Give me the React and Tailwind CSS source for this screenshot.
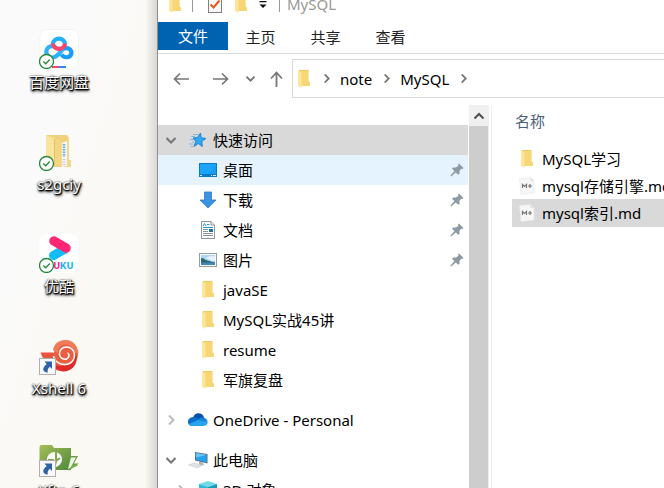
import React from "react";

function FolderIcon({ className = "w-[14px] h-[18px]" }) {
  return (
    <svg viewBox="0 0 14 18" className={className} aria-hidden="true">
      <path d="M2 0h9.500v12H13v4H2z" fill="#f0c95f" />
      <path d="M4 1h7v11h2v4H4z" fill="#f7d675" />
      <path d="M1 0.500 4.500 2v16L1 16z" fill="#ffe59a" />
    </svg>
  );
}

function Chevron({ dir, color = "#777", size = 10, weight = 2 }) {
  const paths = {
    down: "M0.500 3 5 7.500 9.500 3",
    right: "M3 0.500 7.500 5 3 9.500",
    up: "M0.500 7.500 5 3 9.500 7.500",
  };
  return (
    <svg width={size} height={size} viewBox="0 0 10 10" fill="none" stroke={color} strokeWidth={weight} aria-hidden="true">
      <path d={paths[dir]} />
    </svg>
  );
}

function Pin() {
  return (
    <svg width="14" height="14" viewBox="0 0 14 14" aria-hidden="true">
      <path d="M9 0.500 13.500 5 12.300 5.900 11.300 5.700 9.400 8 9.600 10.700 8.300 11.800 5.800 9.500 1.200 13.500 0.300 12.800 4.500 8 2 5.700 3.300 4.400 6 4.600 8.400 2.700 8 1.500z" fill="#8d9aa3" />
    </svg>
  );
}

function StarIcon() {
  return (
    <svg width="20" height="18" viewBox="0 0 20 18" aria-hidden="true">
      <path d="M12.500 2 13.200 6.800 18 7.500 13.800 10.300 14.300 15.500 10.300 12.500 6 15.500 7.800 10.500 5 7 9.300 6.500z" fill="#2fa8f2" stroke="#1b7ccb" strokeWidth="0.900" />
      <path d="M5 3.500h5M3 5.500h4M2 8.500h3M4 11h2M1 13h4M3 15.500h2" stroke="#79b3e3" strokeWidth="0.900" />
    </svg>
  );
}

function DesktopIcon() {
  return (
    <svg width="18" height="14" viewBox="0 0 18 14" aria-hidden="true">
      <rect width="18" height="14" fill="#0b78c8" />
      <rect x="1" y="1" width="16" height="10" fill="#1ba4fb" />
      <path d="M10 11 17 3v8z" fill="#169af2" />
      <path d="M1 12.500h2M12 12.500h1M14 12.500h3" stroke="#d9efff" />
    </svg>
  );
}

function DownloadIcon() {
  return (
    <svg width="18" height="18" viewBox="0 0 18 18" aria-hidden="true">
      <path d="M5.500 1h7v8H17L9 17 1 9h4.500z" fill="#3b93e2" stroke="#2a7cca" strokeWidth="0.800" />
    </svg>
  );
}

function DocumentIcon() {
  return (
    <svg width="16" height="18" viewBox="0 0 16 18" aria-hidden="true">
      <path d="M1.500 0.500h9.500l3.500 3.500v13.500h-13z" fill="#fff" stroke="#8f9598" />
      <path d="M11 0.500v3.500h3.500" fill="#e3e6e8" stroke="#8f9598" />
      <path d="M3 5 4.500 2.500 6 5M7 3.500h2.500M3 6.500h10" stroke="#2695d5" fill="none" />
      <path d="M3 8.500h5M3 10.500h5M3 12.500h10M3 14.500h10" stroke="#8d9498" />
      <rect x="9" y="8" width="4" height="3" fill="#20719c" />
    </svg>
  );
}

function PictureIcon() {
  return (
    <svg width="18" height="14" viewBox="0 0 18 14" aria-hidden="true">
      <rect x="0.500" y="0.500" width="17" height="13" fill="#fff" stroke="#979ca0" />
      <rect x="2" y="2" width="14" height="10" fill="#a9d6f5" />
      <path d="M7 5c2-2 5-2 9-1.500v4c-3 1-6-1-9-2.500z" fill="#e5f3fc" />
      <path d="M2 5c3 0 4 2 6.500 2.500S13 9 16 9.300V10H2z" fill="#2b6b6b" />
      <path d="M2 9.500h14V12H2z" fill="#4586b8" />
    </svg>
  );
}

function CloudIcon() {
  return (
    <svg width="20" height="14" viewBox="0 0 20 14" aria-hidden="true">
      <path d="M5 5C6 1 9 0 11 0.300c3 .3 4.600 2.200 5 4.200L12 9z" fill="#0a50a8" />
      <path d="M4.500 13A4.300 4.300 0 0 1 4 4.300c2.500-.8 4.500.2 6 1.500l6 4L12 13z" fill="#0c6fce" />
      <path d="M15.500 13H4c-1.500 0-2.700-.7-3.300-1.800L11 6.500l5-1.500c5 .6 5 8-.5 8z" fill="#27a3ec" />
      <path d="M9.500 6.800c1.800-2 4-2.700 6.500-2.300l3 3-3 1z" fill="#1583dc" />
    </svg>
  );
}

function ComputerIcon() {
  return (
    <svg width="20" height="18" viewBox="0 0 20 18" aria-hidden="true">
      <path d="M7 1 19.500 3v9.500L7 9.500z" fill="#5a6a76" />
      <path d="M7.800 2 18.700 3.800v7.700L7.800 8.800z" fill="#2aa0f0" />
      <path d="M7.800 2 18.700 3.800 8 6.500z" fill="#6cc5fa" />
      <path d="M11 10.500 15 11.500 16 14.500 11 13.500z" fill="#aab5bd" />
      <path d="M0.500 14 6 12 14 14.500 9.500 17z" fill="#dfe3e6" stroke="#bdc5ca" strokeWidth="0.500" />
    </svg>
  );
}

function CubeIcon() {
  return (
    <svg width="18" height="18" viewBox="0 0 18 18" aria-hidden="true">
      <path d="M0 3 9 0l9 3-9 3z" fill="#6fdcea" />
      <path d="M0 3 9 6v12L0 14z" fill="#31b9d3" />
      <path d="M18 3 9 6v12l9-4z" fill="#159cb9" />
    </svg>
  );
}

function MarkdownIcon() {
  return (
    <svg width="16" height="18" viewBox="0 0 16 18" aria-hidden="true">
      <path d="M0.500 1.500 11.500 0.500l3.500 3V16L2 17.500z" fill="#f6f6f6" stroke="#e9e9e9" strokeWidth="0.600" />
      <path d="M11.500 0.500V4L15 3.500z" fill="#dedede" />
      <path d="M3.500 11V7.500L5.500 9.500 7.500 7.500V11M9 9h4M11 7v4" stroke="#777" strokeWidth="1.200" fill="none" />
    </svg>
  );
}

function SyncBadge() {
  return (
    <g>
      <circle cx="7.500" cy="32.500" r="7" fill="#fff" stroke="#23893a" strokeWidth="1.300" />
      <path d="M4.300 32.500 6.800 34.800 10.800 30.500" fill="none" stroke="#23893a" strokeWidth="1.300" />
    </g>
  );
}

function ShortcutBadge() {
  return (
    <g>
      <rect x="0.500" y="23.500" width="16" height="16" fill="#f7f9fb" stroke="#b0b0b0" />
      <path d="M5.500 26.500H13V34l-2.200-2.200C9 33.300 8.300 35 8.800 37.500 6.500 37.500 3.500 36 4.500 33c.5-1.500 1.800-2.500 3.200-4z" fill="#2f62a5" />
    </g>
  );
}

function NetdiskLogo() {
  return (
    <svg width="40" height="40" viewBox="0 0 40 40" aria-hidden="true">
      <rect x="1" y="0.500" width="38.500" height="38.500" rx="7" fill="#fff" stroke="#ececec" strokeWidth="0.600" />
      <g fill="none" strokeWidth="4.200">
        <path d="M24.500 19.500c-3 2.500-5.500 9-11 9a5.700 5.700 0 1 1 3.500-9.800" stroke="#2cb4fb" />
        <path d="M22.500 25.500c2.500 4 8.500 3.500 9.800-.5 1-4-3.500-7.500-7.800-5" stroke="#179dfb" />
        <path d="M13.800 15a6.200 6.200 0 0 1 12.300 0" stroke="#22b1f7" />
        <path d="M13.800 14.500a6.200 6.200 0 0 0 12.300 0" stroke="#fb456b" />
      </g>
      <path d="M13 37h7v2h-7z" fill="#fb456b" />
      <path d="M20 37h7v2h-7z" fill="#2c89ff" />
      <SyncBadge />
    </svg>
  );
}

function DesktopFolder() {
  return (
    <svg width="40" height="40" viewBox="0 0 40 40" aria-hidden="true">
      <path d="M7 4h21l2 3v22h2v7H11z" fill="#efd07b" />
      <path d="M28 7h2v22h2v7h-4z" fill="#f3d786" />
      <path d="M22.500 12 28 10v25l-5.500 1z" fill="#f3f5f6" />
      <path d="M25 13v13" stroke="#6fb0d8" strokeWidth="2.500" strokeDasharray="1.500 1" />
      <path d="M23.500 28.500h3M23.500 31h3M23.500 33.500h3" stroke="#c9cdd0" strokeWidth="1" />
      <path d="M7 4 16 6l6.500 4v25H16l-9-3z" fill="#f3d582" />
      <path d="M7 4 15 8v28l-8-3z" fill="#fae39c" />
      <path d="M15.500 8v27" stroke="#e2bd64" strokeWidth="0.800" />
      <SyncBadge />
    </svg>
  );
}

function YoukuLogo() {
  return (
    <svg width="40" height="40" viewBox="0 0 40 40" aria-hidden="true">
      <rect x="0.500" y="0.500" width="39" height="39" rx="7" fill="#fff" />
      <path d="M14.500 22.500 26 16" stroke="#13bdfb" strokeWidth="9" strokeLinecap="round" />
      <path d="M15 8 27 15" stroke="#ff2675" strokeWidth="9.500" strokeLinecap="round" />
      <text x="14.500" y="36" fontSize="9" fontWeight="800" fontFamily="Inter, sans-serif" fill="#ff2384">U</text>
      <text x="21" y="36" fontSize="9" fontWeight="800" fontFamily="Inter, sans-serif" fill="#24b4ef">KU</text>
      <SyncBadge />
    </svg>
  );
}

function XshellLogo() {
  return (
    <svg width="40" height="40" viewBox="0 0 40 40" aria-hidden="true">
      <path d="M1.500 17.500H14c4 0 4 10 12 12l-6 6C9 35 5 26 1.500 17.500z" fill="#e8563c" />
      <circle cx="27" cy="19" r="12" fill="#ea5f42" />
      <path d="M15 30c9 3 20-1 22-12 3 10-3 18-12 18.500-4 0-8-2-10-6.500z" fill="#dd2a2a" />
      <path d="M14 15C15 8 21 4.500 27 5c7 .5 11.500 5 12.500 13h-4.500C34 12 30 9 26 9.500c-5 .5-7 4-7 9z" fill="#f07b5a" />
      <path d="M14.500 21c1 6 7 9 12 8.500 6-.5 9.500-5 9-10-.5-4.500-4-7.500-8-7.500-4.500 0-7.500 3.500-7 7.500.5 3.500 4 5.500 7 4.500 2.800-1 3.500-4.500 1-6" fill="none" stroke="#fff" strokeWidth="1.500" />
      <ShortcutBadge />
    </svg>
  );
}

function XftpLogo() {
  return (
    <svg width="40" height="40" viewBox="0 0 40 40" aria-hidden="true">
      <defs>
        <linearGradient id="leaf" x1="0" y1="0" x2="1" y2="1">
          <stop offset="0" stopColor="#a5bd58" />
          <stop offset="1" stopColor="#4f8a3b" />
        </linearGradient>
      </defs>
      <path d="M0.500 10q0-2 2-2H13l2 3h17v22H0.500z" fill="url(#leaf)" />
      <path d="M31 19h8l-4 7.500h5L29 33.500z" fill="#6a9f48" />
      <path d="M32 20.500h5l-4 7.500h3.500L29 32z" fill="#eef4e6" />
      <path d="M33 28h6.500L30 33z" fill="#79ad4e" />
      <circle cx="15.500" cy="22.500" r="7.500" fill="#fff" />
      <path d="M17 15v9M17 24l4-3M17 24c0 3-1.500 5-4 6M9 23h6" stroke="#7ca849" strokeWidth="2" fill="none" />
      <ShortcutBadge />
    </svg>
  );
}

const shortcuts = [
  { name: "百度网盘", Icon: NetdiskLogo },
  { name: "s2gciy", Icon: DesktopFolder },
  { name: "优酷", Icon: YoukuLogo },
  { name: "Xshell 6", Icon: XshellLogo },
  { name: "Xftp 6", Icon: XftpLogo },
];

const quickAccess = [
  { name: "桌面", Icon: DesktopIcon, pinned: true, hovered: true },
  { name: "下载", Icon: DownloadIcon, pinned: true },
  { name: "文档", Icon: DocumentIcon, pinned: true },
  { name: "图片", Icon: PictureIcon, pinned: true },
  { name: "javaSE", Icon: FolderIcon },
  { name: "MySQL实战45讲", Icon: FolderIcon },
  { name: "resume", Icon: FolderIcon },
  { name: "军旗复盘", Icon: FolderIcon },
];

const files = [
  { name: "MySQL学习", Icon: FolderIcon },
  { name: "mysql存储引擎.md", Icon: MarkdownIcon },
  { name: "mysql索引.md", Icon: MarkdownIcon, selected: true },
];

function TreeRow({ name, Icon, pinned, chevron, child, className = "" }) {
  return (
    <button type="button" className={`flex h-[30px] w-full shrink-0 items-center pr-1 text-left ${child ? "pl-[14px]" : "pl-1"} ${className}`}>
      <span className="flex w-[18px] shrink-0 justify-center">
        {chevron && <Chevron dir={chevron} color={chevron === "down" ? "#777" : "#bbb"} />}
      </span>
      <span className="ml-2 flex w-5 shrink-0 justify-center"><Icon /></span>
      <span className="ml-[5px] flex-1 whitespace-nowrap">{name}</span>
      {pinned && <Pin />}
    </button>
  );
}

function Desktop() {
  return (
    <aside className="flex w-[157px] shrink-0 bg-linear-to-br from-[#fafafa] from-30% to-[#fbf9f4] to-60%">
      <ul className="flex w-[118px] flex-col pt-[29px]">
        {shortcuts.map(({ name, Icon }) => (
          <li key={name} className="h-[102px] shrink-0">
            <button type="button" className="flex w-full flex-col items-center gap-[3px]">
              <Icon />
              <span className="leading-5 text-white [text-shadow:1px_1px_1px_#000,0_1px_2px_#000,1px_2px_3px_#000,0_0_2px_#444]">{name}</span>
            </button>
          </li>
        ))}
      </ul>
      <div className="ml-auto w-3 bg-linear-to-r from-transparent to-[#d8d7d3]" />
    </aside>
  );
}

function TitleBar() {
  return (
    <header className="flex h-[22px] shrink-0 items-end overflow-hidden pb-2 pl-[10px]">
      <div className="flex h-5 items-center">
        <FolderIcon />
        <span className="ml-[10px] h-4 w-px bg-[#999]" />
        <button type="button" aria-label="属性" className="ml-[15px]">
          <svg width="14" height="18" viewBox="0 0 14 18" aria-hidden="true">
            <rect x="0.500" y="0.500" width="13" height="17" fill="#f8f8f8" stroke="#808080" />
            <path d="M2.500 9.500 5.500 12.500 11.500 5.500" fill="none" stroke="#e8591c" strokeWidth="2" />
          </svg>
        </button>
        <button type="button" aria-label="新建文件夹" className="ml-3"><FolderIcon /></button>
        <button type="button" aria-label="自定义快速访问工具栏" className="ml-[11px]">
          <svg width="8" height="8" viewBox="0 0 8 8" aria-hidden="true">
            <path d="M0.500 1h7v1.200h-7zM0.500 4.500h7L4 8z" fill="#111" />
          </svg>
        </button>
        <span className="ml-3 h-4 w-px bg-[#999]" />
        <h1 className="ml-[7px] text-[#999]">MySQL</h1>
      </div>
    </header>
  );
}

function Ribbon() {
  return (
    <nav className="flex h-8 shrink-0 items-start border-b border-[#dadada] text-[#222]">
      <button type="button" className="h-7 w-[70px] bg-[#0063b1] text-white">文件</button>
      {["主页", "共享", "查看"].map((tab) => (
        <button key={tab} type="button" className="h-[29px] w-[65px]">{tab}</button>
      ))}
    </nav>
  );
}

function AddressBar() {
  return (
    <div className="flex shrink-0 items-center pt-[5px] pb-[7px] pl-[15px]">
      <button type="button" aria-label="后退">
        <svg width="17" height="14" viewBox="0 0 17 14" fill="none" stroke="#777" strokeWidth="1.700" aria-hidden="true"><path d="M16 7H1.500M7 1.500 1.500 7 7 12.500" /></svg>
      </button>
      <button type="button" aria-label="前进" className="ml-[22px]">
        <svg width="17" height="14" viewBox="0 0 17 14" fill="none" stroke="#777" strokeWidth="1.700" aria-hidden="true"><path d="M1 7h14.500M10 1.500 15.500 7 10 12.500" /></svg>
      </button>
      <button type="button" aria-label="最近浏览的位置" className="ml-[17px]"><Chevron dir="down" size={9} /></button>
      <button type="button" aria-label="向上" className="ml-[15px]">
        <svg width="13" height="16" viewBox="0 0 13 16" fill="none" stroke="#777" strokeWidth="1.800" aria-hidden="true"><path d="M6.500 16V1.500M1 7.500 6.500 1.500 12 7.500" /></svg>
      </button>
      <div className="ml-[9px] flex h-[39px] flex-1 items-center border border-r-0 border-[#d9d9d9] pl-1">
        <FolderIcon />
        <span className="ml-[11px]"><Chevron dir="right" size={9} /></span>
        <button type="button" className="ml-[9px]">note</button>
        <span className="ml-[10px]"><Chevron dir="right" size={9} /></span>
        <button type="button" className="ml-[9px]">MySQL</button>
        <span className="ml-[10px]"><Chevron dir="right" size={9} /></span>
      </div>
    </div>
  );
}

function NavigationPane() {
  return (
    <div className="flex w-[334px] shrink-0 border-r border-[#f0f0f0]">
      <nav className="flex w-[310px] flex-col pt-5">
        <TreeRow name="快速访问" Icon={StarIcon} chevron="down" className="bg-[#d9d9d9]" />
        {quickAccess.map((item) => (
          <TreeRow key={item.name} name={item.name} Icon={item.Icon} pinned={item.pinned} child className={item.hovered ? "bg-[#e5f3ff]" : ""} />
        ))}
        <TreeRow name="OneDrive - Personal" Icon={CloudIcon} chevron="right" className="mt-[10px]" />
        <TreeRow name="此电脑" Icon={ComputerIcon} chevron="down" className="mt-[10px]" />
        <TreeRow name="3D 对象" Icon={CubeIcon} chevron="right" child />
      </nav>
      <div className="ml-px flex w-5 flex-col bg-[#f0f0f0] pr-px">
        <button type="button" aria-label="向上滚动" className="flex h-[21px] shrink-0 items-center justify-center">
          <Chevron dir="up" color="#505050" />
        </button>
        <div className="flex-1 bg-[#cdcdcd]" />
      </div>
    </div>
  );
}

function FileList() {
  return (
    <main className="min-w-0 flex-1 overflow-hidden pl-5">
      <table className="w-full table-fixed border-collapse">
        <thead>
          <tr className="h-10">
            <th scope="col" className="pt-0 pb-2 pl-[3px] text-left align-middle font-normal text-[#4c607a]">名称</th>
          </tr>
        </thead>
        <tbody>
          {files.map(({ name, Icon, selected }) => (
            <tr key={name} className={selected ? "h-7 bg-[#d9d9d9]" : "h-[27px]"}>
              <td className="p-0">
                <div className="flex items-center pl-[7px]">
                  <span className="flex w-4 shrink-0 justify-center"><Icon /></span>
                  <span className="ml-[7px] whitespace-nowrap">{name}</span>
                </div>
              </td>
            </tr>
          ))}
        </tbody>
      </table>
    </main>
  );
}

export default function App() {
  return (
    <div className="flex h-screen overflow-hidden bg-white font-['Noto_Sans','Noto_Sans_CJK_SC',sans-serif] text-[15px] leading-5 text-black">
      <Desktop />
      <section className="flex min-w-0 flex-1 flex-col overflow-hidden border-l border-[#8f8f8f] bg-white">
        <TitleBar />
        <Ribbon />
        <AddressBar />
        <div className="flex min-h-0 flex-1 overflow-hidden">
          <NavigationPane />
          <FileList />
        </div>
      </section>
    </div>
  );
}
